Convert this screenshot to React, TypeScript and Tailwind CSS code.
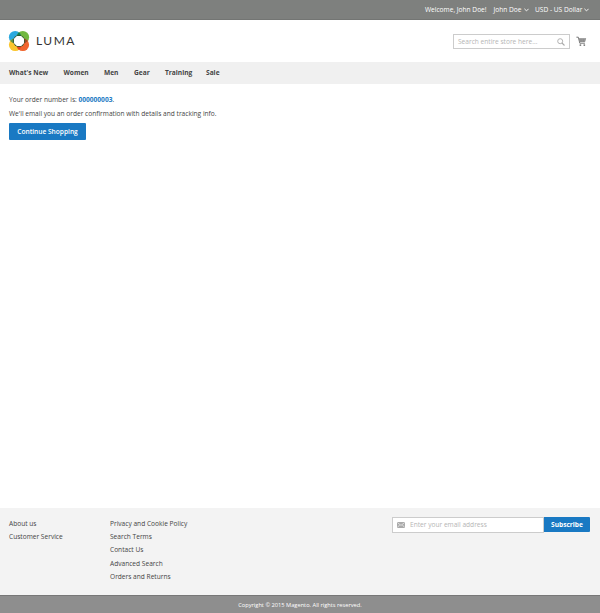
import React from 'react';

const navItems = [
  { label: "What's New", width: 'w-[54.5px]' },
  { label: 'Women', width: 'w-[40.5px]' },
  { label: 'Men', width: 'w-[30px]' },
  { label: 'Gear', width: 'w-[31px]' },
  { label: 'Training', width: 'w-[41px]' },
  { label: 'Sale', width: 'w-[20px]' },
];

const aboutLinks = ['About us', 'Customer Service'];
const storeLinks = ['Privacy and Cookie Policy', 'Search Terms', 'Contact Us', 'Advanced Search', 'Orders and Returns'];

function LumaMark() {
  return (
    <svg className="h-[22px] w-[22px] shrink-0" viewBox="0 0 22 22">
      <circle cx="7.2" cy="7.2" r="6.3" fill="#2ba9df" />
      <circle cx="14.8" cy="7.2" r="6.3" fill="#72b840" />
      <circle cx="7.2" cy="14.8" r="6.3" fill="#fbc52b" />
      <circle cx="14.8" cy="14.8" r="6.3" fill="#f0642c" />
      <path d="M11 2.2a6.3 6.3 0 0 1 0 10a6.3 6.3 0 0 1 0-10Z" fill="#0d7d59" />
      <path d="M2.2 11a6.3 6.3 0 0 1 10 0a6.3 6.3 0 0 1-10 0Z" fill="#5d9144" />
      <path d="M9.8 11a6.3 6.3 0 0 1 10 0a6.3 6.3 0 0 1-10 0Z" fill="#a04b25" />
      <path d="M11 9.8a6.3 6.3 0 0 1 0 10a6.3 6.3 0 0 1 0-10Z" fill="#e5451f" />
      <circle cx="11" cy="11" r="5.9" fill="#35532f" />
      <path d="M8.8 6h4.4L16 8.8v4.4L13.2 16H8.8L6 13.2V8.8Z" fill="#fff" />
    </svg>
  );
}

function Chevron() {
  return (
    <svg className="ml-[2px] h-[4px] w-[5px]" viewBox="0 0 5 4" fill="none" stroke="#fff" strokeWidth="0.9">
      <path d="M.4.8 2.5 2.9 4.6.8" />
    </svg>
  );
}

function Cart() {
  return (
    <svg className="ml-[6px] h-[11px] w-[11px]" viewBox="0 0 11 11" fill="none">
      <path d="M.4 1.2h1.9l1.5 6h5.1" stroke="#777" strokeWidth="1" />
      <path d="M2.7 2.3h7.5L9 6.1H3.7Z" fill="#858585" />
      <path d="M3 3.7h7M3.4 5h6M5 2.3v4M6.7 2.3v4M8.4 2.3v4" stroke="#b5b5b5" strokeWidth=".25" />
      <circle cx="4.4" cy="9.1" r=".95" fill="#777" />
      <circle cx="8.3" cy="9.1" r=".95" fill="#777" />
    </svg>
  );
}

export default function App() {
  return (
    <div className="flex h-[613px] w-[600px] flex-col overflow-hidden bg-white font-['Open_Sans',sans-serif] text-[6.6px] leading-[10px] whitespace-nowrap text-[#444]">
      <header>
        <div className="flex h-[20px] items-center justify-end border-b border-[#737573] bg-[#7e807e] pr-[10px] text-white">
          <span className="w-[68.5px]">Welcome, John Doe!</span>
          <span className="flex w-[41.5px] items-center">John Doe<Chevron /></span>
          <span className="flex w-[55px] items-center">USD - US Dollar<Chevron /></span>
        </div>
        <div className="flex h-[42px] items-center pr-[13px] pl-[8px]">
          <LumaMark />
          <span className="ml-[6px] font-['Lato',sans-serif] text-[12px] leading-[14px] tracking-[1.5px] text-[#333]">LUMA</span>
          <div className="mt-[1px] ml-auto flex h-[15px] w-[117px] items-center justify-between border border-[#ccc] pr-[4px] pl-[4px] text-[#b5b5b5]">
            <span>Search entire store here...</span>
            <svg className="h-[8px] w-[8px]" viewBox="0 0 8 8" fill="none" stroke="#aaa" strokeWidth=".9">
              <circle cx="3.2" cy="3.2" r="2.5" />
              <path d="m5 5 2.5 2.5" strokeWidth="1.1" />
            </svg>
          </div>
          <Cart />
        </div>
        <nav className="flex h-[22px] items-center bg-[#f0f0f0] pl-[9px] font-bold">
          {navItems.map((item) => (
            <span key={item.label} className={item.width}>{item.label}</span>
          ))}
        </nav>
      </header>
      <main className="flex-1 pt-[11px] pl-[9px]">
        <p>Your order number is: <b className="text-[#1979c3]">000000003</b>.</p>
        <p className="mt-[4px]">We'll email you an order confirmation with details and tracking info.</p>
        <button className="mt-[4px] flex h-[17px] w-[77px] items-center justify-center rounded-[1px] bg-[#1979c3] font-semibold text-white">Continue Shopping</button>
      </main>
      <footer>
        <div className="flex h-[87px] bg-[#f3f3f3] pt-[9px] pr-[10px] pl-[9px]">
          <ul className="w-[101px] leading-[13.2px]">
            {aboutLinks.map((link) => <li key={link}>{link}</li>)}
          </ul>
          <ul className="leading-[13.2px]">
            {storeLinks.map((link) => <li key={link}>{link}</li>)}
          </ul>
          <form className="ml-auto flex h-[16px]">
            <div className="flex h-[16px] w-[152px] items-center border border-[#ccc] bg-white pl-[4px] text-[#b5b5b5]">
              <svg className="mr-[5px] h-[6px] w-[8px]" viewBox="0 0 8 6">
                <rect width="8" height="6" rx=".4" fill="#aaa" />
                <path d="m.4.6 3.6 2.8L7.6.6M.3 5.5l2.4-2.6m5 2.6L5.3 2.9" fill="none" stroke="#fff" strokeWidth=".6" />
              </svg>
              Enter your email address
            </div>
            <button type="button" className="h-[15px] w-[46px] rounded-r-[1px] bg-[#1979c3] font-bold text-white">Subscribe</button>
          </form>
        </div>
        <div className="flex h-[18px] items-center justify-center border-t border-[#777] bg-[#8e8e8e] text-[5.7px] text-white">Copyright © 2015 Magento. All rights reserved.</div>
      </footer>
    </div>
  );
}
